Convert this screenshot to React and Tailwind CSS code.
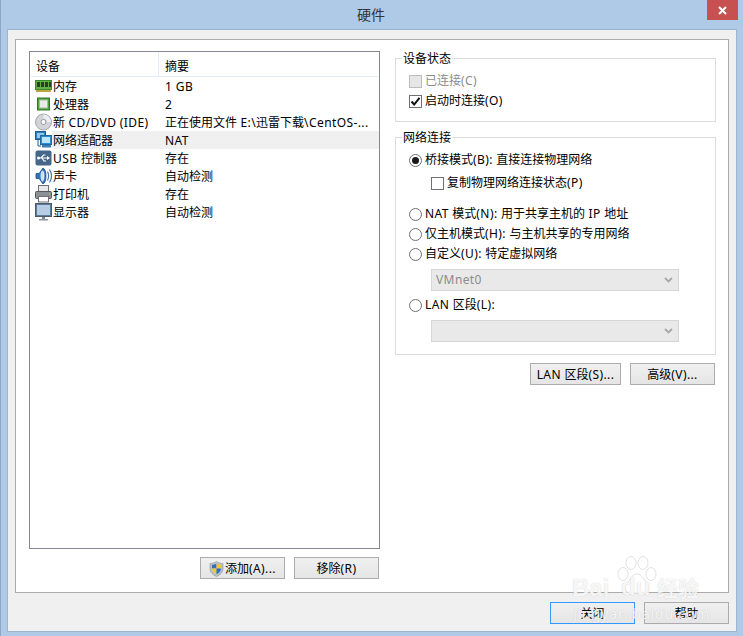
const rows = [
  { name: "内存", value: "1 GB", icon: "ram" },
  { name: "处理器", value: "2", icon: "cpu" },
  { name: "新 CD/DVD (IDE)", value: "正在使用文件 E:\\迅雷下载\\CentOS-...", icon: "cd" },
  { name: "网络适配器", value: "NAT", icon: "net", selected: true },
  { name: "USB 控制器", value: "存在", icon: "usb" },
  { name: "声卡", value: "自动检测", icon: "sound" },
  { name: "打印机", value: "存在", icon: "printer" },
  { name: "显示器", value: "自动检测", icon: "monitor" },
];

// latin runs are a bit wider in the reference than Noto Sans gives
function Label({ text }) {
  return (
    <span className="whitespace-pre">
      {text.split(/([\x00-\x7f]+)/).map((part, i) =>
        /[\x00-\x7f]/.test(part) ? (
          <span key={i} className="tracking-[0.4px]">{part}</span>
        ) : (
          part
        )
      )}
    </span>
  );
}

function DeviceIcon({ type }) {
  if (type === "ram") {
    return (
      <svg width="17" height="16" viewBox="0 0 17 16">
        <rect x="0.500" y="2.500" width="16" height="9" fill="#68b044" stroke="#3c8a2c" />
        <rect x="2" y="4" width="3" height="5" fill="#2e3a2e" />
        <rect x="6" y="4" width="3" height="5" fill="#2e3a2e" />
        <rect x="10" y="4" width="3" height="5" fill="#2e3a2e" />
        <rect x="14" y="4" width="2" height="5" fill="#2e3a2e" />
        <path d="M1 12h15v2H1z" fill="#b9a640" />
      </svg>
    );
  }
  if (type === "cpu") {
    return (
      <svg width="17" height="16" viewBox="0 0 17 16">
        <rect x="2.500" y="2" width="12" height="12" fill="#4f9a3a" stroke="#2f7a22" />
        <rect x="4.500" y="4" width="8" height="8" fill="#e6ece4" stroke="#a5bda3" />
      </svg>
    );
  }
  if (type === "cd") {
    return (
      <svg width="17" height="18" viewBox="0 0 17 18">
        <circle cx="8.500" cy="9" r="8" fill="#d2d4d8" stroke="#a3a6ab" />
        <path d="M8.500 1.500a7.500 7.500 0 0 1 7.500 7.500h-4a3.500 3.500 0 0 0-3.500-3.500z" fill="#eceef0" />
        <circle cx="8.500" cy="9" r="2.500" fill="#fff" stroke="#94979c" />
      </svg>
    );
  }
  if (type === "net") {
    return (
      <svg width="17" height="18" viewBox="0 0 17 18">
        <rect x="0.500" y="0.500" width="10" height="8" fill="#2f7fc4" stroke="#1c5a94" />
        <rect x="2" y="2" width="7" height="5" fill="#8fc8ef" />
        <path d="M3 9v6h3" fill="none" stroke="#1c5a94" />
        <rect x="5.500" y="4.500" width="11" height="9" fill="#2f8ccf" stroke="#1c6aa4" />
        <rect x="7" y="6" width="8" height="6" fill="#bfe4f8" />
        <rect x="7" y="14" width="9" height="2.500" fill="#3f7fb0" />
      </svg>
    );
  }
  if (type === "usb") {
    return (
      <svg width="17" height="16" viewBox="0 0 17 16">
        <rect x="0.500" y="0.500" width="16" height="15" rx="2" fill="#46678a" />
        <path d="M3 8h10M6 8l2.500-3h2M7 8l2 3h2" fill="none" stroke="#fff" strokeWidth="1.200" />
        <circle cx="3.500" cy="8" r="1.500" fill="#fff" />
        <path d="M12 6l3 2-3 2z" fill="#fff" />
      </svg>
    );
  }
  if (type === "sound") {
    return (
      <svg width="17" height="18" viewBox="0 0 17 18">
        <path d="M1 6.500h3l4-5.500c2 1 3 4 3 8s-1 7-3 8l-4-5.500H1z" fill="#2f73b8" stroke="#1f4f86" strokeWidth="0.800" />
        <ellipse cx="7.500" cy="9" rx="2" ry="5.500" fill="#cfe3f5" />
        <path d="M12.500 4.500c1.500 3 1.500 6 0 9M14.500 2.500c2.500 4 2.500 9 0 13" fill="none" stroke="#4c74a0" strokeWidth="1.200" />
      </svg>
    );
  }
  if (type === "printer") {
    return (
      <svg width="17" height="18" viewBox="0 0 17 18">
        <rect x="3.500" y="0.500" width="10" height="6" fill="#e9e9e9" stroke="#6f6f6f" />
        <rect x="0.500" y="6.500" width="16" height="7" rx="1" fill="#8b9097" stroke="#55585d" />
        <rect x="3.500" y="11.500" width="10" height="5.500" fill="#fff" stroke="#6f6f6f" />
        <rect x="14" y="8" width="1.500" height="1.500" fill="#5fce5f" />
      </svg>
    );
  }
  return (
    <svg width="17" height="18" viewBox="0 0 17 18">
      <rect x="0.500" y="0.500" width="16" height="13" fill="#5c7d9c" stroke="#4a5a6a" />
      <rect x="2" y="2" width="13" height="10" fill="#b6cde3" />
      <rect x="7" y="14" width="3" height="2" fill="#7c8790" />
      <rect x="4" y="16" width="9" height="1.500" fill="#8d979f" />
    </svg>
  );
}

function Shield() {
  return (
    <svg width="15" height="16" viewBox="0 0 15 16">
      <path d="M7.500 0.500C5.500 2 3 2.500 1 2.500v5c0 4 3 6.500 6.500 8C11 14 14 11.500 14 7.500v-5C12 2.500 9.500 2 7.500 0.500z" fill="#b9c0c8" stroke="#8d949c" strokeWidth="0.600" />
      <path d="M7.500 2.500C6 3.500 4.500 3.900 3 4v3.500h4.500z" fill="#2f6fc4" />
      <path d="M7.500 2.500v5H12V4c-1.500-.1-3-.5-4.500-1.500z" fill="#f5c92b" />
      <path d="M3 7.500c.2 2.800 2.200 4.500 4.500 5.700V7.500z" fill="#f5c92b" />
      <path d="M7.500 7.500v5.700c2.300-1.200 4.300-2.900 4.500-5.700z" fill="#2f6fc4" />
    </svg>
  );
}

function Button({ children, className = "", focused = false }) {
  return (
    <button
      className={`flex items-center justify-center h-[22px] pt-[1px] bg-gradient-to-b from-[#f0f0f0] to-[#e5e5e5] border text-[12px] text-black ${
        focused ? "border-[#3399ff]" : "border-[#acacac]"
      } ${className}`}
    >
      {children}
    </button>
  );
}

function Radio({ checked }) {
  return (
    <span className="flex items-center justify-center w-[13px] h-[13px] rounded-full border border-[#707070] bg-white shrink-0">
      {checked && <span className="w-[7px] h-[7px] rounded-full bg-[#1a1a1a]" />}
    </span>
  );
}

function Checkbox({ checked, disabled }) {
  return (
    <span
      className={`flex items-center justify-center w-[13px] h-[13px] border shrink-0 ${
        disabled ? "border-[#bcbcbc] bg-[#e6e6e6]" : "border-[#707070] bg-white"
      }`}
    >
      {checked && (
        <svg width="11" height="11" viewBox="0 0 11 11">
          <path d="M1.500 5.500l2.700 3L9.500 1.800" fill="none" stroke="#111" strokeWidth="2" />
        </svg>
      )}
    </span>
  );
}

function Select({ value }) {
  return (
    <div className="flex items-center justify-between w-[248px] h-[22px] ml-[35px] bg-[#e9e9e9] border border-[#d6d6d6] pl-[4px] pr-[5px] text-[12px] text-[#8b8b8b]">
      <span className="tracking-[0.4px]">{value}</span>
      <svg width="9" height="6" viewBox="0 0 9 6">
        <path d="M1 1l3.500 3.500L8 1" fill="none" stroke="#a8a8a8" strokeWidth="1.800" />
      </svg>
    </div>
  );
}

function Group({ title, className = "", children }) {
  return (
    <div className={`border border-[#dcdcdc] ${className}`}>
      <div className="w-fit -mt-[7px] ml-[6px] px-[1px] bg-white text-[12px] leading-[14px] text-black">{title}</div>
      {children}
    </div>
  );
}

const wordmark = "[text-shadow:0_0_1px_rgba(90,90,90,0.35)]";

export default function App() {
  return (
    <div
      className="relative w-[743px] h-[636px] overflow-hidden bg-[#aecae7] border-l border-[#8ea6c2] flex flex-col text-black"
      style={{ fontFamily: '"Noto Sans", "Noto Sans CJK SC", sans-serif' }}
    >
      <div className="flex items-start justify-between h-[29px] shrink-0">
        <div className="flex-1 pt-[6px] pl-[34px] text-center text-[14px] leading-[18px] text-[#333]">硬件</div>
        <div className="flex items-center justify-center w-[31px] h-[20px] mr-[5px] bg-[#c75050]">
          <svg width="9" height="9" viewBox="0 0 9 9">
            <path d="M1 1l7 7M8 1l-7 7" stroke="#fff" strokeWidth="2" />
          </svg>
        </div>
      </div>

      <div className="w-[730px] h-[603px] ml-[6px] bg-[#f0f0f0] border border-[#9db4cf] pt-[9px] pl-[7px]">
        <div className="flex w-[714px] h-[554px] bg-white border border-[#ababab] pt-[11px] pl-[13px]">
          <div className="flex flex-col w-[351px]">
            <div className="h-[498px] border border-[#85878f]">
              <div className="flex h-[25px] mx-[1px] border-b border-[#e3ecf8] text-[12px] leading-[29px]">
                <div className="w-[128px] pl-[5px] border-r border-[#e3ecf8]">设备</div>
                <div className="pl-[6px]">摘要</div>
              </div>
              {rows.map((row) => (
                <div key={row.name} className="flex items-center h-[18px] text-[12px] leading-[20px]">
                  <span className="flex items-center justify-center w-[17px] h-[18px] ml-[5px] shrink-0">
                    <DeviceIcon type={row.icon} />
                  </span>
                  <div className={`flex flex-1 h-[18px] ${row.selected ? "bg-[#f0f0f0]" : ""}`}>
                    <div className="w-[113px] pl-[1px] whitespace-nowrap"><Label text={row.name} /></div>
                    <div className="whitespace-nowrap"><Label text={row.value} /></div>
                  </div>
                </div>
              ))}
            </div>
            <div className="flex justify-end gap-[9px] mt-[8px] pr-[1px]">
              <Button className="w-[85px]">
                <Shield />
                <span className="ml-[1px]"><Label text="添加(A)..." /></span>
              </Button>
              <Button className="w-[85px]"><Label text="移除(R)" /></Button>
            </div>
          </div>

          <div className="flex flex-col w-[321px] ml-[15px] pt-[7px]">
            <Group title="设备状态" className="h-[64px]">
              <div className="flex items-center gap-[3px] h-[20px] mt-[5px] pl-[13px] text-[12px] text-[#8b8b8b]">
                <Checkbox disabled />
                <Label text="已连接(C)" />
              </div>
              <div className="flex items-center gap-[3px] h-[20px] pl-[13px] text-[12px]">
                <Checkbox checked />
                <Label text="启动时连接(O)" />
              </div>
            </Group>
            <Group title="网络连接" className="h-[218px] mt-[15px]">
              <div className="flex items-center gap-[3px] h-[20px] mt-[5px] pl-[13px] text-[12px]">
                <Radio checked />
                <Label text="桥接模式(B): 直接连接物理网络" />
              </div>
              <div className="flex items-center gap-[3px] h-[20px] mt-[3px] pl-[35px] text-[12px]">
                <Checkbox />
                <Label text="复制物理网络连接状态(P)" />
              </div>
              <div className="flex items-center gap-[3px] h-[20px] mt-[11px] pl-[13px] text-[12px]">
                <Radio />
                <Label text="NAT 模式(N): 用于共享主机的 IP 地址" />
              </div>
              <div className="flex items-center gap-[3px] h-[20px] pl-[13px] text-[12px]">
                <Radio />
                <Label text="仅主机模式(H): 与主机共享的专用网络" />
              </div>
              <div className="flex items-center gap-[3px] h-[20px] pl-[13px] text-[12px]">
                <Radio />
                <Label text="自定义(U): 特定虚拟网络" />
              </div>
              <div className="mt-[5px]">
                <Select value="VMnet0" />
              </div>
              <div className="flex items-center gap-[3px] h-[20px] mt-[4px] pl-[13px] text-[12px]">
                <Radio />
                <Label text="LAN 区段(L):" />
              </div>
              <div className="mt-[5px]">
                <Select value="" />
              </div>
            </Group>
            <div className="flex justify-end gap-[9px] mt-[8px] pr-[1px]">
              <Button className="w-[91px]"><Label text="LAN 区段(S)..." /></Button>
              <Button className="w-[85px]"><Label text="高级(V)..." /></Button>
            </div>
          </div>
        </div>
        <div className="flex justify-end gap-[9px] mt-[9px] pr-[7px]">
          <Button className="w-[85px]" focused>关闭</Button>
          <Button className="w-[85px]">帮助</Button>
        </div>
      </div>

      <div className="absolute left-[570px] top-[555px] w-[135px] h-[68px] pointer-events-none text-white/85">
        <svg className="absolute left-[45px] top-[1px]" width="42" height="42" viewBox="0 0 42 42">
          <g fill="#ffffff" fillOpacity="0.85" stroke="#8a8a8a" strokeOpacity="0.25" strokeWidth="1">
            <ellipse cx="7" cy="18" rx="5" ry="6.500" />
            <ellipse cx="15" cy="7" rx="5" ry="6.500" />
            <ellipse cx="27" cy="7" rx="5" ry="6.500" />
            <ellipse cx="35" cy="18" rx="5" ry="6.500" />
            <path d="M21 18c-5 0-6 5-10 9-4 5 0 12 5 11 4-1 6-1 10 0 5 1 9-6 5-11-4-4-5-9-10-9z" />
          </g>
        </svg>
        <span className={`absolute left-[1px] top-[19px] text-[24px] leading-[28px] font-bold ${wordmark}`} style={{ fontFamily: '"Liberation Sans", sans-serif' }}>Bai</span>
        <span className={`absolute left-[50px] top-[18px] text-[24px] leading-[28px] font-bold ${wordmark}`} style={{ fontFamily: '"Liberation Sans", sans-serif' }}>du</span>
        <span className={`absolute left-[86px] top-[21px] text-[21px] leading-[24px] font-bold whitespace-nowrap ${wordmark}`}>经验</span>
        <span className={`absolute left-[2px] top-[50px] text-[15px] leading-[16px] whitespace-nowrap tracking-[0.4px] ${wordmark}`}>jingyan.baidu.com</span>
      </div>
    </div>
  );
}
